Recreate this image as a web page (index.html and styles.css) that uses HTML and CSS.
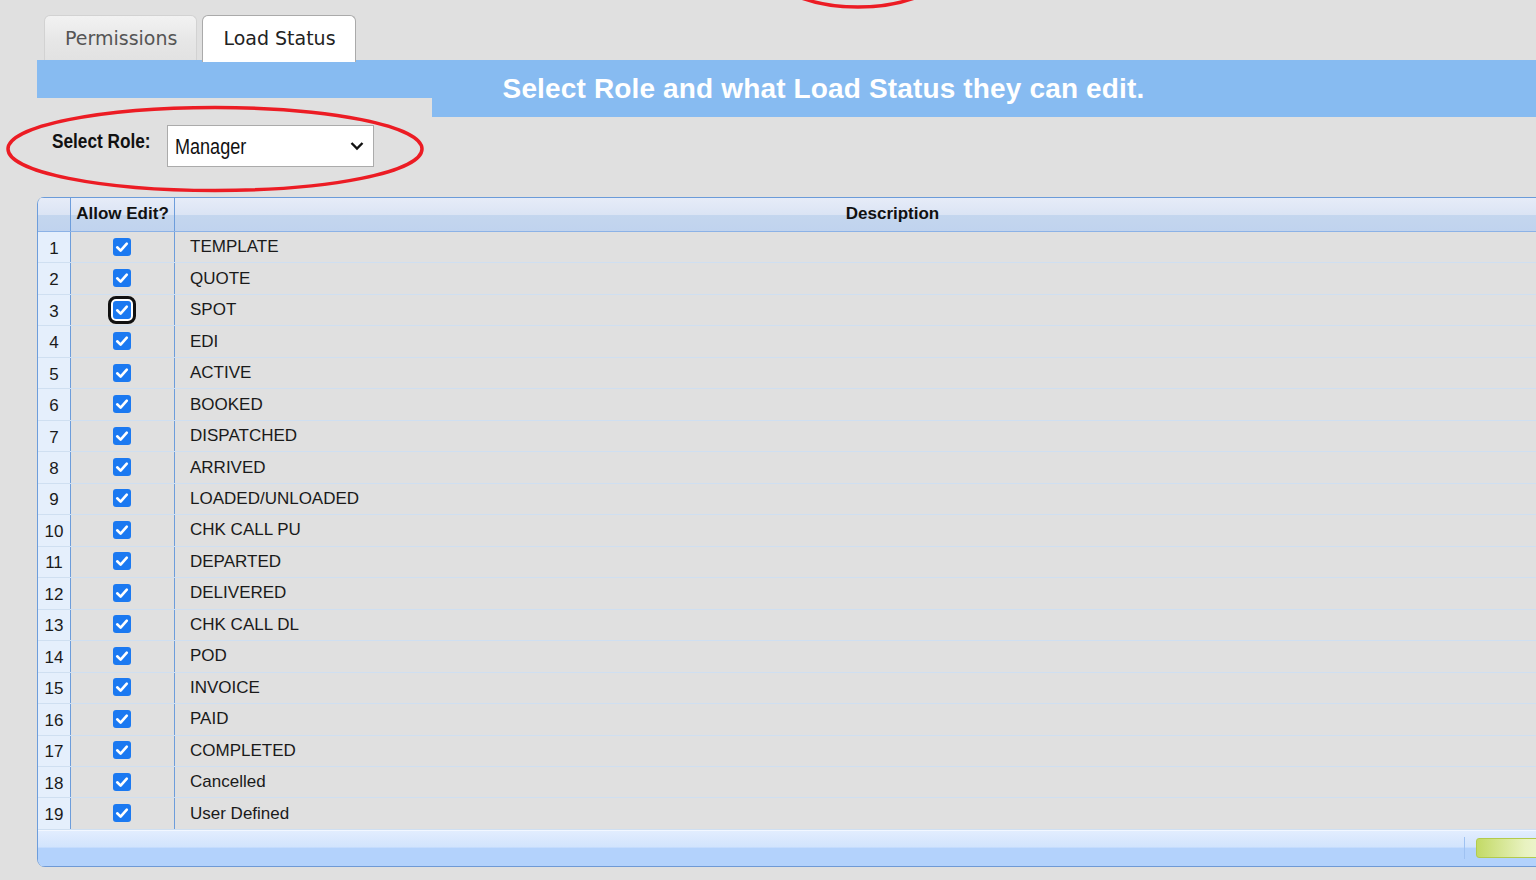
FILE: index.html
```html
<!DOCTYPE html>
<html>
<head>
<meta charset="utf-8">
<title>Load Status</title>
<link rel="stylesheet" href="styles.css">
</head>
<body>
<div class="page">
  <div class="tabs">
    <div class="tab">Permissions</div>
    <div class="tab active">Load Status</div>
  </div>
  <div class="banner">
    <div class="banner-left"></div>
    <div class="banner-title">Select Role and what Load Status they can edit.</div>
  </div>
  <div class="role-row">
    <label class="role-label"><span class="narrow">Select Role:</span></label>
    <div class="select">
      <span class="sel-text"><span class="narrow">Manager</span></span>
      <svg class="chev" width="14" height="10" viewBox="0 0 14 10"><path d="M1.5 2 L7 7.5 L12.5 2" fill="none" stroke="#111" stroke-width="2.4"/></svg>
    </div>
  </div>

  <div class="grid">
    <div class="ghead">
      <div class="c-num"></div>
      <div class="c-allow">Allow Edit?</div>
      <div class="c-desc hd">Description</div>
    </div>
    <div class="gbody" id="gbody"></div>
    <div class="gfoot">
      <div class="sep"></div>
      <div class="green"></div>
    </div>
  </div>

  <svg class="marks" width="1536" height="200" viewBox="0 0 1536 200">
    <ellipse cx="215" cy="149" rx="207" ry="41.5" fill="none" stroke="#ec1c24" stroke-width="3.5"/>
    <ellipse cx="858" cy="-45" rx="100" ry="52" fill="none" stroke="#ec1c24" stroke-width="3.5"/>
  </svg>
</div>
<script>
  var items = ["TEMPLATE","QUOTE","SPOT","EDI","ACTIVE","BOOKED","DISPATCHED","ARRIVED","LOADED/UNLOADED","CHK CALL PU","DEPARTED","DELIVERED","CHK CALL DL","POD","INVOICE","PAID","COMPLETED","Cancelled","User Defined"];
  var body = document.getElementById('gbody');
  var html = '';
  items.forEach(function (t, i) {
    html += '<div class="grow">' +
      '<div class="c-num">' + (i + 1) + '</div>' +
      '<div class="c-allow"><span class="cb' + (i === 2 ? ' focus' : '') + '"><svg width="18" height="18" viewBox="0 0 18 18"><path d="M4.2 9.3 L7.6 12.6 L13.8 5.6" fill="none" stroke="#fff" stroke-width="2.6" stroke-linecap="round" stroke-linejoin="round"/></svg></span></div>' +
      '<div class="c-desc">' + t + '</div>' +
      '</div>';
  });
  body.innerHTML = html;
</script>
</body>
</html>
```

FILE: styles.css
```css
html, body {
  margin: 0;
  padding: 0;
  overflow: hidden;
}
body {
  background: #e0e0e0;
  font-family: "Liberation Sans", Arial, sans-serif;
  color: #1a1a1a;
}
.page {
  position: relative;
  width: 1609px;
  height: 880px;
}

/* tabs */
.tabs {
  display: flex;
  align-items: flex-start;
  gap: 5px;
  padding: 15px 0 0 44px;
  height: 45px;
}
.tab {
  box-sizing: border-box;
  height: 45px;
  line-height: 44px;
  padding: 0 19px 0 20px;
  border: 1px solid #d2d2d2;
  border-bottom: none;
  border-radius: 6px 6px 0 0;
  background: linear-gradient(#f2f2f2, #e6e6e6 60%, #e2e2e2);
  font-family: "DejaVu Sans", Verdana, sans-serif;
  font-size: 19px;
  color: #555;
}
.tab.active {
  position: relative;
  z-index: 2;
  height: 47px;
  margin-bottom: -2px;
  background: #fff;
  border-color: #aaa;
  color: #222;
}

/* banner */
.banner {
  display: flex;
  align-items: flex-start;
  margin-left: 37px;
}
.banner-left {
  width: 395px;
  height: 38px;
  background: #87bbf1;
}
.banner-title {
  flex: 1;
  height: 57px;
  line-height: 57px;
  background: #87bbf1;
  color: #fff;
  font-weight: bold;
  font-size: 28px;
  text-align: center;
  padding-right: 394px;
  letter-spacing: 0.15px;
}

/* role select */
.role-row {
  display: flex;
  align-items: flex-start;
  gap: 16px;
  margin-top: 8px;
  padding-left: 52px;
}
.narrow {
  display: inline-block;
  white-space: nowrap;
  transform: scaleX(0.82);
  transform-origin: left center;
}
.role-label {
  width: 99px;
  white-space: nowrap;
  font-weight: bold;
  font-size: 21px;
  line-height: 32px;
  color: #111;
}
.select {
  box-sizing: border-box;
  width: 207px;
  height: 42px;
  border: 1px solid #ababab;
  background: #fff;
  display: flex;
  align-items: center;
  justify-content: space-between;
  padding: 2px 9px 0 7px;
  font-size: 22px;
  color: #111;
}
.sel-text {
  width: 80px;
  white-space: nowrap;
}
.chev {
  margin-top: -3px;
}

/* grid */
.grid {
  margin: 30px 0 0 37px;
  width: 1572px;
  border-left: 1px solid #6d9ddb;
  border-radius: 7px 0 0 8px;
  overflow: hidden;
}
.ghead {
  box-sizing: border-box;
  height: 35px;
  display: flex;
  border-top: 1px solid #6b9bd9;
  border-bottom: 1px solid #8cb2e6;
  background: linear-gradient(#e6ecf8 0%, #dbe4f4 50%, #c4d6ee 52%, #c0d3ee 100%);
  font-weight: bold;
  font-size: 17px;
  color: #111;
}
.ghead > div {
  display: flex;
  align-items: center;
  justify-content: center;
  padding-bottom: 1px;
}
.c-num {
  box-sizing: border-box;
  width: 33px;
  flex: none;
  border-right: 1px solid #6d9ddb;
}
.c-allow {
  box-sizing: border-box;
  width: 104px;
  flex: none;
  border-right: 1px solid #6d9ddb;
}
.c-desc {
  flex: 1;
}
.grow {
  box-sizing: border-box;
  height: 31.47px;
  display: flex;
  border-bottom: 1px solid #cfdff1;
  font-size: 17px;
  color: #1a1a1a;
}
.grow .c-num {
  background: #e5effc;
  display: flex;
  align-items: center;
  justify-content: center;
  padding-top: 3px;
}
.grow .c-allow {
  display: flex;
  align-items: center;
  justify-content: center;
  padding-right: 2px;
  padding-bottom: 1px;
}
.grow .c-desc {
  display: flex;
  align-items: center;
  padding-left: 15px;
}
.cb {
  width: 18px;
  height: 18px;
  border-radius: 3px;
  background: #1b79f1;
  display: block;
}
.cb svg {
  display: block;
}
.cb.focus {
  outline: 3px solid #111;
  outline-offset: 2px;
  box-shadow: 0 0 0 2px #fff;
  border-radius: 3px;
}

.gfoot {
  box-sizing: border-box;
  height: 37px;
  display: flex;
  align-items: center;
  border-top: 1px solid #f2f7ff;
  border-bottom: 1px solid #6f9ad6;
  background: linear-gradient(#e2edfe 0%, #d2e4fd 45%, #b3d2fc 50%, #b3d2fc 100%);
}
.sep {
  width: 1px;
  height: 22px;
  margin-left: 1426px;
  background: #9fc2f2;
}
.green {
  margin-left: 11px;
  width: 80px;
  height: 18px;
  border: 1px solid #b3cb4c;
  border-radius: 3px;
  background: linear-gradient(90deg, #c3da66, #e8f2c0 60%, #f3f8de);
}

.marks {
  position: absolute;
  left: 0;
  top: 0;
  pointer-events: none;
}
```
